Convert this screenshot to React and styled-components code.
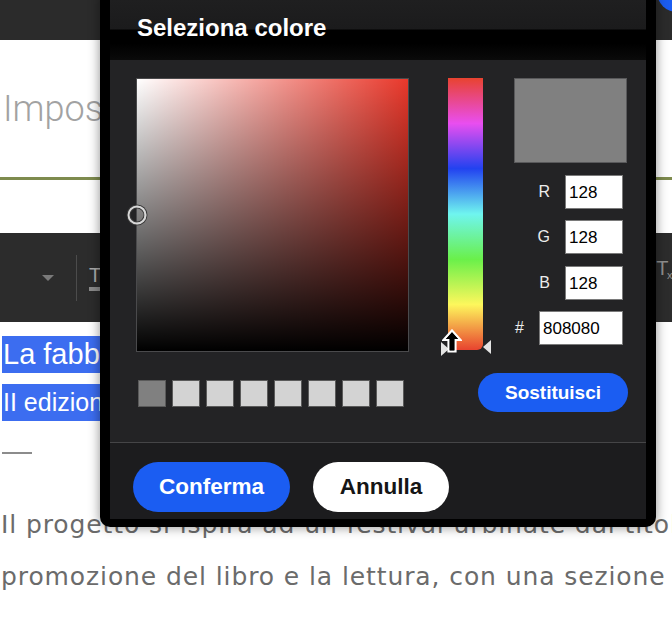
import React from "react";
import styled, { createGlobalStyle } from "styled-components";

const Global = createGlobalStyle`
  html, body { margin: 0; padding: 0; background: #fff; overflow: hidden; }
  body { width: 672px; height: 638px; }
  * { box-sizing: border-box; }
`;

const UI = `"Liberation Sans", Arial, Helvetica, sans-serif`;
const BLUE = "#1b5df2";

const Page = styled.div`
  position: relative;
  width: 672px;
  height: 638px;
  overflow: hidden;
  font-family: ${UI};
`;

const TopBar = styled.div`
  height: 40px;
  background: #2b2b2b;
`;

const Avatar = styled.div`
  position: absolute;
  left: 657px;
  top: -28px;
  width: 40px;
  height: 40px;
  border-radius: 50%;
  background: ${BLUE};
`;

const Hero = styled.div`
  height: 193px;
  padding-top: 48px;
  display: flex;
  flex-direction: column;
`;

const HeroTitle = styled.div`
  font-family: Roboto, sans-serif;
  font-weight: 300;
  font-size: 36px;
  line-height: 42px;
  color: #a2a2a2;
  padding-left: 3px;
  white-space: nowrap;
`;

const OliveRule = styled.div`
  margin-top: 47px;
  height: 3px;
  background: #7e8b4e;
`;

const Toolbar = styled.div`
  height: 89px;
  background: #2c2c2c;
  display: flex;
  align-items: center;
  padding-left: 42px;
`;

const Caret = styled.span`
  width: 0;
  height: 0;
  border-left: 6px solid transparent;
  border-right: 6px solid transparent;
  border-top: 6px solid #7a7a7a;
`;

const ToolDivider = styled.span`
  width: 1px;
  height: 46px;
  margin-left: 22px;
  background: #4c4c4c;
`;

const ColorT = styled.span`
  margin-left: 12px;
  display: flex;
  flex-direction: column;
  align-items: flex-start;
  color: #aaa;
  font-size: 20px;
  line-height: 20px;
  &::after {
    content: "";
    width: 14px;
    height: 4px;
    margin-top: 2px;
    background: #8a8a8a;
  }
`;

const ClearFormat = styled.span`
  margin-left: auto;
  margin-right: 1px;
  white-space: nowrap;
  color: #8f8f8f;
  font-size: 20px;
  line-height: 20px;
  margin-top: -12px;
  letter-spacing: -1.5px;
`;

const Sub = styled.span`
  font-size: 11px;
  vertical-align: -4px;
`;

const Content = styled.div`
  padding: 14px 0 0 2px;
  display: flex;
  flex-direction: column;
  align-items: flex-start;
`;

const Highlight = styled.div`
  background: #3c6df0;
  color: #fff;
  height: 37px;
  line-height: 37px;
  font-size: ${(p) => p.$size}px;
  padding-left: 1px;
  white-space: nowrap;
  margin-top: ${(p) => p.$gap || 0}px;
`;

const Dash = styled.div`
  margin-top: 31px;
  width: 30px;
  height: 2px;
  background: #8c8c8c;
`;

const Paragraph = styled.p`
  margin: 45px 0 0 -1px;
  font-family: "DejaVu Sans", Verdana, sans-serif;
  font-size: 25px;
  letter-spacing: 0.9px;
  line-height: 52px;
  color: #6b6b6b;
  white-space: nowrap;
`;

/* ---------- dialog ---------- */

const Dialog = styled.div`
  position: absolute;
  left: 100px;
  top: -10px;
  width: 556px;
  padding: 10px 10px 8px 10px;
  background: #000;
  border-radius: 10px;
  box-shadow: 0 0 12px rgba(0, 0, 0, 0.45);
`;

const Header = styled.div`
  height: 60px;
  padding-left: 27px;
  padding-top: 14px;
  background: linear-gradient(
    to bottom,
    #1f1f20 0px,
    #1b1b1c 29px,
    #000 30px,
    #000 43px,
    #0a0a0a 60px
  );
`;

const Title = styled.h2`
  margin: 0;
  font-family: ${UI};
  font-weight: 700;
  font-size: 24px;
  line-height: 28px;
  color: #fff;
`;

const Panel = styled.div`
  background: #232325;
  padding: 18px 18px 30px 26px;
  border-bottom: 1px solid #454547;
`;

const TopRow = styled.div`
  display: flex;
  align-items: flex-start;
`;

const SVBox = styled.div`
  position: relative;
  width: 273px;
  height: 274px;
  border: 1px solid #4a4a4c;
  background: linear-gradient(to top, #000, rgba(0, 0, 0, 0)),
    linear-gradient(to right, #fff, rgba(255, 255, 255, 0)), #e9382b;
`;

const SVMarker = styled.span`
  position: absolute;
  left: 0;
  top: 50%;
  width: 19px;
  height: 19px;
  transform: translate(-50%, -50%);
  border-radius: 50%;
  border: 2px solid #d8d8d8;
  box-shadow: 0 0 0 1px #3a3a3a, inset 0 0 0 1px #3a3a3a;
`;

const HueBar = styled.div`
  position: relative;
  margin-left: 39px;
  width: 35px;
  height: 272px;
  border-radius: 0 0 6px 6px;
  background: linear-gradient(
    to bottom,
    #e8432f 0%,
    #e94ef0 16.7%,
    #2242f0 33.3%,
    #6ff5ef 50%,
    #6af04a 66.7%,
    #fdf75c 83.3%,
    #e8432f 100%
  );
`;

const Pointer = styled.span`
  position: absolute;
  width: 0;
  height: 0;
  border-top: 7px solid transparent;
  border-bottom: 7px solid transparent;
  ${(p) =>
    p.$side === "left"
      ? `left: -7px; top: 264px; border-left: 8px solid #e4e4e4;`
      : `left: 35px; top: 262px; border-right: 8px solid #e4e4e4;`}
`;

const Cursor = styled.svg`
  position: absolute;
  left: -6px;
  top: 251px;
`;

const Side = styled.div`
  margin-left: 31px;
  width: 113px;
  display: flex;
  flex-direction: column;
  gap: 11.5px;
`;

const Preview = styled.div`
  height: 85px;
  background: #808080;
  border: 1px solid #59595b;
`;

const Field = styled.label`
  display: flex;
  align-items: center;
  justify-content: flex-end;
  gap: 15px;
  padding-right: 4px;
  color: #ececec;
  font-size: 16px;
`;

const Input = styled.input`
  width: ${(p) => p.$w}px;
  height: 34px;
  border: 1px solid #7a7a7a;
  background: #fff;
  color: #000;
  font-family: ${UI};
  font-size: 17px;
  padding: 2px 0 0 3px;
  outline: none;
`;

const BottomRow = styled.div`
  margin-top: 21px;
  display: flex;
  align-items: center;
  justify-content: space-between;
`;

const Swatches = styled.div`
  display: flex;
  gap: 6px;
  padding-left: 2px;
  margin-top: 2px;
`;

const Swatch = styled.span`
  width: 28px;
  height: 27px;
  background: ${(p) => p.$c};
  border: 1px solid #5a5a5a;
`;

const PillButton = styled.button`
  height: ${(p) => p.$h}px;
  width: ${(p) => p.$w}px;
  border: none;
  border-radius: ${(p) => p.$h / 2}px;
  background: ${(p) => (p.$light ? "#fff" : BLUE)};
  color: ${(p) => (p.$light ? "#151515" : "#fff")};
  font-family: ${UI};
  font-weight: 700;
  font-size: ${(p) => p.$fs}px;
  padding: 0;
  cursor: pointer;
`;

const Footer = styled.div`
  background: #1c1c1e;
  padding: 19px 0 7px 23px;
  display: flex;
  gap: 23px;
`;

const swatches = ["#808080", "#d3d3d3", "#d3d3d3", "#d3d3d3", "#d3d3d3", "#d3d3d3", "#d3d3d3", "#d3d3d3"];

export default function App() {
  return (
    <Page>
      <Global />
      <TopBar />
      <Avatar />
      <Hero>
        <HeroTitle>Impostazioni</HeroTitle>
        <OliveRule />
      </Hero>
      <Toolbar>
        <Caret />
        <ToolDivider />
        <ColorT>T</ColorT>
        <ClearFormat>
          T<Sub>x</Sub>
        </ClearFormat>
      </Toolbar>
      <Content>
        <Highlight $size={29}>La fabbrica delle storie</Highlight>
        <Highlight $size={25} $gap={11}>II edizione del festival</Highlight>
        <Dash />
        <Paragraph>
          Il progetto si ispira ad un festival urbinate dal titolo
          <br />
          promozione del libro e la lettura, con una sezione
        </Paragraph>
      </Content>

      <Dialog>
        <Header>
          <Title>Seleziona colore</Title>
        </Header>
        <Panel>
          <TopRow>
            <SVBox>
              <SVMarker />
            </SVBox>
            <HueBar>
              <Pointer $side="left" />
              <Pointer $side="right" />
              <Cursor width="20" height="24" viewBox="0 0 20 24">
                <path
                  d="M10 1.5 L18.5 11 L13.5 11 L13.5 22.5 L6.5 22.5 L6.5 11 L1.5 11 Z"
                  fill="#000"
                  stroke="#fff"
                  strokeWidth="2.2"
                  strokeLinejoin="miter"
                />
                <path
                  d="M10 3.6 L16 10 L12.3 10 L12.3 21.3 L7.7 21.3 L7.7 10 L4 10 Z"
                  fill="#000"
                />
              </Cursor>
            </HueBar>
            <Side>
              <Preview />
              <Field>
                R<Input $w={58} defaultValue="128" />
              </Field>
              <Field>
                G<Input $w={58} defaultValue="128" />
              </Field>
              <Field>
                B<Input $w={58} defaultValue="128" />
              </Field>
              <Field>
                #<Input $w={84} defaultValue="808080" />
              </Field>
            </Side>
          </TopRow>
          <BottomRow>
            <Swatches>
              {swatches.map((c, i) => (
                <Swatch key={i} $c={c} />
              ))}
            </Swatches>
            <PillButton $h={39} $w={150} $fs={19}>
              Sostituisci
            </PillButton>
          </BottomRow>
        </Panel>
        <Footer>
          <PillButton $h={50} $w={157} $fs={22.5}>
            Conferma
          </PillButton>
          <PillButton $h={50} $w={136} $fs={22.5} $light>
            Annulla
          </PillButton>
        </Footer>
      </Dialog>
    </Page>
  );
}
